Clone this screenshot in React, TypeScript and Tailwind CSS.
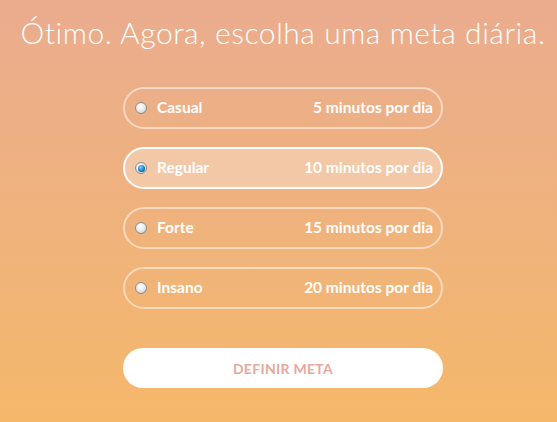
import { useState } from 'react';

const goals = [
  { name: 'Casual', minutes: '5 minutos por dia' },
  { name: 'Regular', minutes: '10 minutos por dia' },
  { name: 'Forte', minutes: '15 minutos por dia' },
  { name: 'Insano', minutes: '20 minutos por dia' },
];

function Radio({ checked }: { checked: boolean }) {
  return (
    <span className="w-[12px] h-[12px] rounded-full border border-[#8e8e8e] bg-[radial-gradient(circle_at_45%_35%,#ffffff_0%,#e6e6e6_55%,#b9b9b9_100%)] flex items-center justify-center shrink-0">
      {checked && (
        <span className="w-[7px] h-[7px] rounded-full bg-[radial-gradient(circle_at_40%_35%,#7fd0ff_0%,#1680c8_55%,#0a3f73_100%)]" />
      )}
    </span>
  );
}

export default function App() {
  const [selected, setSelected] = useState('Regular');

  return (
    <div className="w-full h-[422px] pl-[9px] bg-gradient-to-b from-[#eaac8e] to-[#f5b86a] flex flex-col items-center font-['Lato','Open_Sans',sans-serif] text-white">
      <h1 className="mt-[8px] text-[30px] font-light tracking-[0.55px] leading-[48px] whitespace-nowrap">Ótimo. Agora, escolha uma meta diária.</h1>

      <div className="mt-[31px] w-[320px] flex flex-col gap-[18px]">
        {goals.map((g) => {
          const isSel = g.name === selected;
          return (
            <button
              key={g.name}
              onClick={() => setSelected(g.name)}
              className={`h-[42px] rounded-[21px] border-2 flex items-center pl-[10px] pr-[8px] text-[15.5px] font-bold ${
                isSel ? 'border-white bg-white/30' : 'border-white/50'
              }`}
            >
              <Radio checked={isSel} />
              <span className="ml-[10px]">{g.name}</span>
              <span className="ml-auto">{g.minutes}</span>
            </button>
          );
        })}
      </div>

      <button className="mt-[39px] w-[320px] h-[40px] rounded-[20px] bg-white text-[#e8a89c] text-[14px] font-bold tracking-[0.3px]">
        DEFINIR META
      </button>
    </div>
  );
}
